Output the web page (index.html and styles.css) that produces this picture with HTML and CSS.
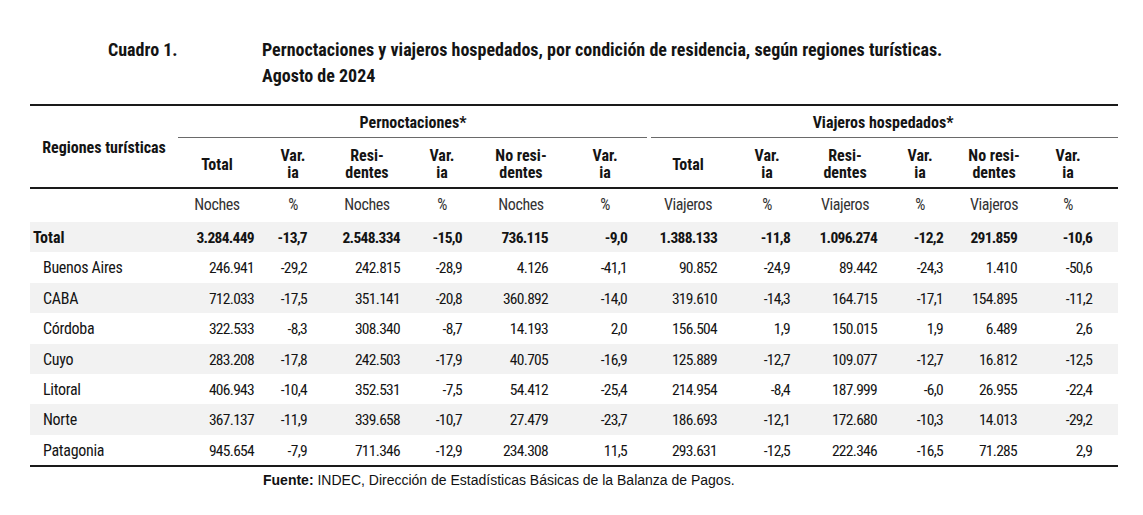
FILE: index.html
```html
<!DOCTYPE html>
<html lang="es">
<head>
<meta charset="utf-8">
<title>Cuadro 1</title>
<link rel="stylesheet" href="styles.css">
</head>
<body>
<header class="title">
  <div class="title-label">Cuadro 1.</div>
  <div class="title-text">Pernoctaciones y viajeros hospedados, por condición de residencia, según regiones turísticas.<br>Agosto de 2024</div>
</header>
<table class="data">
  <colgroup>
    <col class="w0"><col class="w1"><col class="w2"><col class="w3"><col class="w4"><col class="w5"><col class="w6">
    <col class="w7"><col class="w8"><col class="w9"><col class="w10"><col class="w11"><col class="w12">
  </colgroup>
  <thead>
    <tr class="group-row">
      <th class="region-head" rowspan="2">Regiones turísticas</th>
      <th class="group group-a" colspan="6">Pernoctaciones*</th>
      <th class="group group-b" colspan="6">Viajeros hospedados*</th>
    </tr>
    <tr class="col-row">
      <th>Total</th><th>Var.<br>ia</th><th>Resi-<br>dentes</th><th>Var.<br>ia</th><th>No resi-<br>dentes</th><th>Var.<br>ia</th>
      <th>Total</th><th>Var.<br>ia</th><th>Resi-<br>dentes</th><th>Var.<br>ia</th><th>No resi-<br>dentes</th><th class="last">Var.<br>ia</th>
    </tr>
  </thead>
  <tbody>
    <tr class="units">
      <td></td><td>Noches</td><td>%</td><td>Noches</td><td>%</td><td>Noches</td><td>%</td>
      <td>Viajeros</td><td>%</td><td>Viajeros</td><td>%</td><td>Viajeros</td><td class="last">%</td>
    </tr>
    <tr class="row total shade">
      <td class="name">Total</td><td>3.284.449</td><td>-13,7</td><td>2.548.334</td><td>-15,0</td><td>736.115</td><td>-9,0</td>
      <td>1.388.133</td><td>-11,8</td><td>1.096.274</td><td>-12,2</td><td>291.859</td><td>-10,6</td>
    </tr>
    <tr class="row">
      <td class="name">Buenos Aires</td><td>246.941</td><td>-29,2</td><td>242.815</td><td>-28,9</td><td>4.126</td><td>-41,1</td>
      <td>90.852</td><td>-24,9</td><td>89.442</td><td>-24,3</td><td>1.410</td><td>-50,6</td>
    </tr>
    <tr class="row shade">
      <td class="name">CABA</td><td>712.033</td><td>-17,5</td><td>351.141</td><td>-20,8</td><td>360.892</td><td>-14,0</td>
      <td>319.610</td><td>-14,3</td><td>164.715</td><td>-17,1</td><td>154.895</td><td>-11,2</td>
    </tr>
    <tr class="row">
      <td class="name">Córdoba</td><td>322.533</td><td>-8,3</td><td>308.340</td><td>-8,7</td><td>14.193</td><td>2,0</td>
      <td>156.504</td><td>1,9</td><td>150.015</td><td>1,9</td><td>6.489</td><td>2,6</td>
    </tr>
    <tr class="row shade">
      <td class="name">Cuyo</td><td>283.208</td><td>-17,8</td><td>242.503</td><td>-17,9</td><td>40.705</td><td>-16,9</td>
      <td>125.889</td><td>-12,7</td><td>109.077</td><td>-12,7</td><td>16.812</td><td>-12,5</td>
    </tr>
    <tr class="row">
      <td class="name">Litoral</td><td>406.943</td><td>-10,4</td><td>352.531</td><td>-7,5</td><td>54.412</td><td>-25,4</td>
      <td>214.954</td><td>-8,4</td><td>187.999</td><td>-6,0</td><td>26.955</td><td>-22,4</td>
    </tr>
    <tr class="row shade">
      <td class="name">Norte</td><td>367.137</td><td>-11,9</td><td>339.658</td><td>-10,7</td><td>27.479</td><td>-23,7</td>
      <td>186.693</td><td>-12,1</td><td>172.680</td><td>-10,3</td><td>14.013</td><td>-29,2</td>
    </tr>
    <tr class="row last-row">
      <td class="name">Patagonia</td><td>945.654</td><td>-7,9</td><td>711.346</td><td>-12,9</td><td>234.308</td><td>11,5</td>
      <td>293.631</td><td>-12,5</td><td>222.346</td><td>-16,5</td><td>71.285</td><td>2,9</td>
    </tr>
  </tbody>
</table>
<p class="source"><b>Fuente:</b> INDEC, Dirección de Estadísticas Básicas de la Balanza de Pagos.</p>
</body>
</html>
```

FILE: styles.css
```css
html, body {
  margin: 0;
  padding: 0;
  background: #ffffff;
  color: #141414;
}

body {
  font-family: "Roboto Condensed", Roboto, sans-serif;
  font-stretch: 75%;
}

.title {
  display: flex;
  padding: 37px 0 0 108px;
  font-size: 18px;
  font-weight: bold;
  line-height: 26px;
}

.title-label {
  width: 154px;
  flex: none;
}

.data {
  margin: 15px 0 0 30px;
  width: 1088px;
  border-collapse: collapse;
  table-layout: fixed;
  font-size: 16px;
  border-top: 2px solid #1a1a1a;
  border-bottom: 2px solid #1a1a1a;
}

.w0 { width: 148px; }
.w1 { width: 78px; }
.w2 { width: 74px; }
.w3 { width: 74px; }
.w4 { width: 76px; }
.w5 { width: 82px; }
.w6 { width: 86px; }
.w7 { width: 80px; }
.w8 { width: 78px; }
.w9 { width: 78px; }
.w10 { width: 72px; }
.w11 { width: 76px; }
.w12 { width: 86px; }

th, td {
  padding: 0;
}

th {
  font-weight: bold;
  text-align: center;
  vertical-align: middle;
}

.region-head {
  line-height: 18px;
  padding-top: 3px;
  border-bottom: 2px solid #1a1a1a;
}

.group-row th.group {
  line-height: 18px;
  padding: 8px 0 6px;
}

.group-a {
  background: linear-gradient(#6a6a6a, #6a6a6a) no-repeat left bottom / calc(100% - 1px) 1px;
}

.group-b {
  background: linear-gradient(#6a6a6a, #6a6a6a) no-repeat right bottom / calc(100% - 3px) 1px;
}

.col-row th {
  line-height: 17px;
  padding: 9px 0 6px;
  height: 34px;
  border-bottom: 2px solid #1a1a1a;
}

.col-row th.last {
  padding-right: 14px;
}

.units td {
  padding: 7px 0 8px;
  text-align: center;
  color: #333333;
  font-size: 16px;
  letter-spacing: -0.4px;
  line-height: 18px;
}

.units td.last {
  padding-right: 14px;
}

.row td {
  padding-top: 7px;
  padding-bottom: 5.4px;
  line-height: 18px;
  font-size: 15.5px;
  letter-spacing: -0.7px;
  text-align: right;
  vertical-align: middle;
}

.row.shade td {
  background: #f2f2f2;
}

.row td.name {
  text-align: left;
  padding-left: 13px;
  font-size: 16px;
  letter-spacing: -0.3px;
}

.row.total td {
  font-weight: bold;
}

.row.total td.name {
  padding-left: 3px;
  letter-spacing: 0;
}

.row td:nth-child(2) { padding-right: 2px; }
.row td:nth-child(3) { padding-right: 23px; }
.row td:nth-child(4) { padding-right: 4px; }
.row td:nth-child(5) { padding-right: 18px; }
.row td:nth-child(6) { padding-right: 14px; }
.row td:nth-child(7) { padding-right: 21px; }
.row td:nth-child(8) { padding-right: 11px; }
.row td:nth-child(9) { padding-right: 16px; }
.row td:nth-child(10) { padding-right: 7px; }
.row td:nth-child(11) { padding-right: 13px; }
.row td:nth-child(12) { padding-right: 15px; }
.row td:nth-child(13) { padding-right: 26px; }

.source {
  margin: 5px 0 0 263px;
  font-family: "Liberation Sans", Arial, sans-serif;
  font-stretch: normal;
  font-size: 14px;
  line-height: 16px;
  color: #111111;
}
```
